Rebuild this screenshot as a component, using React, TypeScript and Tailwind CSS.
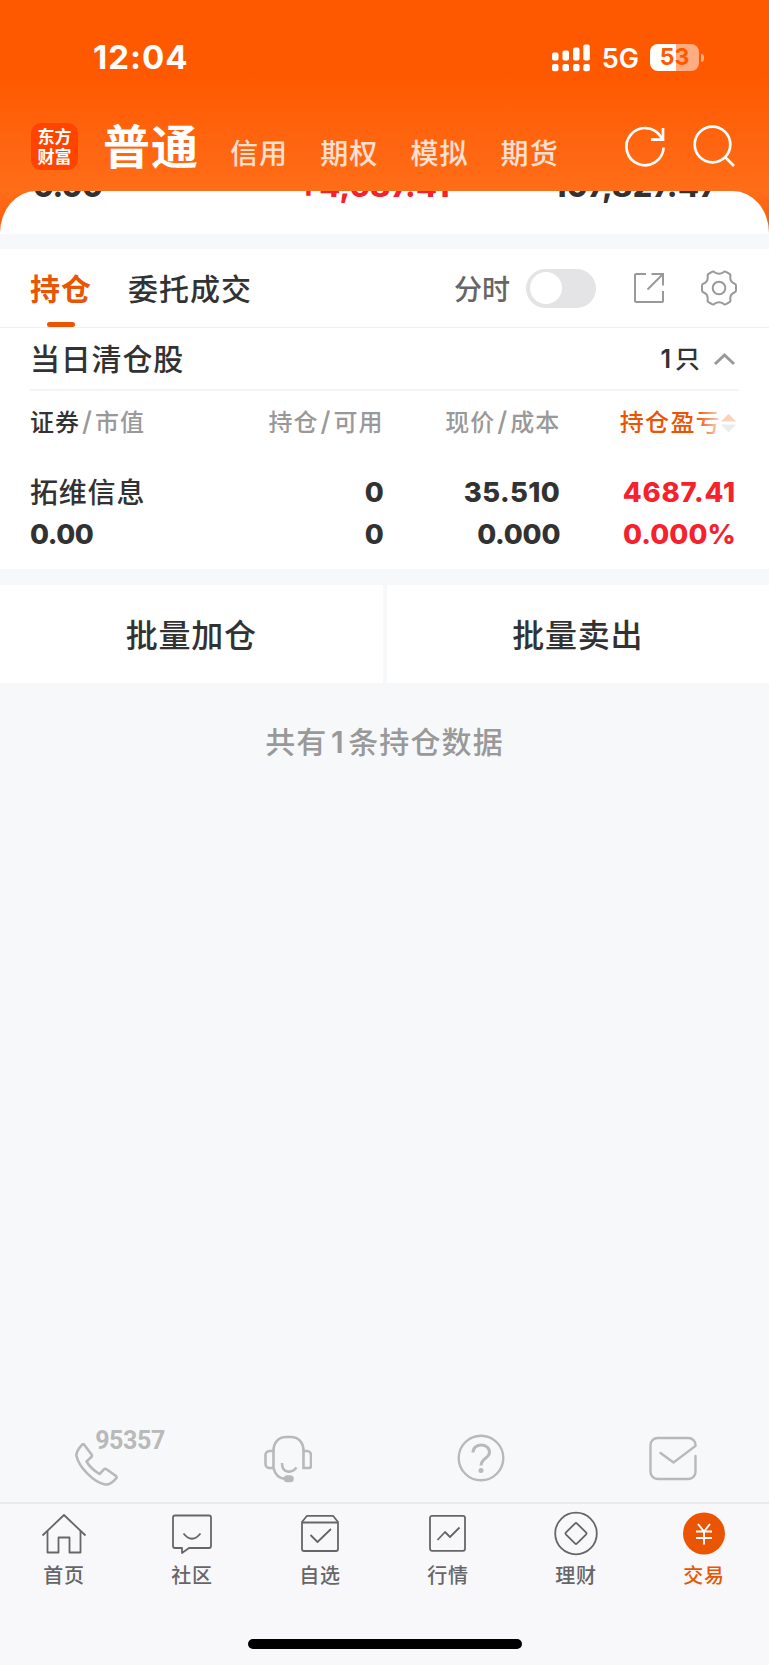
import React from "react";
import clsx from "clsx";

const ACCOUNT_TABS = ["信用", "期权", "模拟", "期货"];

const COLUMNS = [
  { main: "持仓", sub: "可用" },
  { main: "现价", sub: "成本" },
];

const SERVICES = [
  { key: "phone", icon: <PhoneIcon /> },
  { key: "support", icon: <HeadsetIcon /> },
  { key: "help", icon: <HelpIcon /> },
  { key: "feedback", icon: <MailIcon /> },
];

const NAV_ITEMS = [
  { label: "首页", icon: <HomeIcon /> },
  { label: "社区", icon: <CommunityIcon /> },
  { label: "自选", icon: <WatchlistIcon /> },
  { label: "行情", icon: <MarketIcon /> },
  { label: "理财", icon: <WealthIcon /> },
  { label: "交易", icon: <TradeIcon />, active: true },
];

export default function App() {
  return (
    <div className="flex h-[1665px] w-[769px] flex-col overflow-hidden bg-[#f7f8fa] font-['Inter','Noto_Sans_CJK_SC',sans-serif] text-[#323232]">
      <Header />
      <AssetSummary />
      <Positions />
      <BatchActions />
      <p className="mt-[41px] text-center text-[30px] font-medium leading-[36px] tracking-[1.1px] text-[#999]">
        共有<span className="mx-[3.5px] font-semibold">1</span>条持仓数据
      </p>
      <div className="flex-1" />
      <ServiceBar />
      <BottomNav />
    </div>
  );
}

function Header() {
  return (
    <header className="h-[191px] shrink-0 bg-linear-to-b from-[#ff5900] from-40% to-[#ff6d18] text-white">
      <div className="flex h-[115px] items-center justify-between pl-[93px] pr-[65px]">
        <span className="text-[33px] font-bold leading-none tracking-[1px]">
          12:04
        </span>
        <div className="flex items-center">
          <SignalIcon />
          <span className="ml-3 mr-[11px] pt-[2px] text-[27px] font-semibold leading-none">
            5G
          </span>
          <BatteryIcon />
        </div>
      </div>
      <div className="flex h-[62px] items-center pl-[31px] pr-[34px]">
        <div className="flex size-[47px] flex-col items-center justify-center rounded-[10px] bg-[#ff4400] font-['Noto_Sans_CJK_SC',sans-serif] text-[17px] font-bold leading-[20px]">
          <span>东方</span>
          <span>财富</span>
        </div>
        <h1 className="ml-[25px] text-[47px] font-bold leading-none tracking-[1px]">
          普通
        </h1>
        <nav className="ml-[31px] mt-[16px] flex gap-8">
          {ACCOUNT_TABS.map((tab) => (
            <span
              key={tab}
              className="text-[28px] font-medium leading-none tracking-[1.1px] text-white/80"
            >
              {tab}
            </span>
          ))}
        </nav>
        <div className="ml-auto flex items-center gap-[27px]">
          <RefreshIcon />
          <SearchIcon />
        </div>
      </div>
    </header>
  );
}

// Scrolled card, only the bottom edge of the figures stays visible
function AssetSummary() {
  return (
    <section className="h-[43px] shrink-0 bg-linear-to-b from-[#ff6d18] to-[#ff5900]">
      <div className="h-full overflow-hidden rounded-t-[36px_42px] bg-white px-[33px]">
        <div className="-mt-[22px] flex text-[30.5px] font-extrabold leading-[34px] tracking-[0.3px]">
          <span className="w-[265px] tracking-[-0.7px]">0.00</span>
          <span className="w-[255px] text-[#f5222d]">+4,687.41</span>
          <span>107,827.47</span>
        </div>
      </div>
    </section>
  );
}

function Positions() {
  return (
    <section className="mt-[15px] h-[320px] shrink-0 bg-white">
      <div className="flex h-[79px] items-center border-b border-[#f0f0f2] pr-[32px] pl-[30px]">
        <div className="relative flex h-full items-center pt-[2px] text-[30px] font-bold tracking-[1px] text-[#ea5504]">
          持仓
          <span className="absolute bottom-0 left-[17px] h-[5px] w-[28px] rounded-full bg-[#ea5504]" />
        </div>
        <span className="ml-[36px] pt-[2px] text-[30px] font-medium tracking-[1px]">
          委托成交
        </span>
        <span className="ml-auto pt-[3px] text-[28px] font-medium text-[#666]">
          分时
        </span>
        <span className="ml-[16px] flex h-[39px] w-[70px] items-center rounded-full bg-[#e4e4e6] pl-1">
          <span className="size-8 rounded-full bg-white" />
        </span>
        <span className="ml-[38px]">
          <ExportIcon />
        </span>
        <span className="ml-[37px]">
          <GearIcon />
        </span>
      </div>

      <div className="mx-[30px] flex h-[63px] items-center border-b-2 border-[#f4f4f6]">
        <span className="pt-px text-[30px] font-medium tracking-[0.8px]">
          当日清仓股
        </span>
        <span className="ml-auto mr-[13px] pt-[2px] text-[25px] font-medium">
          <span className="mr-[4px] font-semibold">1</span>只
        </span>
        <svg width="23" height="14" viewBox="0 0 23 14" className="mr-[3px]">
          <path d="M2 12 11.5 3 21 12" fill="none" stroke="#999" strokeWidth="3" />
        </svg>
      </div>

      <div className="mx-[30px] mt-[14px] grid w-[707px] grid-cols-4 text-right text-[24px] font-medium leading-[36px] tracking-[1px] text-[#999]">
        <span className="text-left">
          <span className="text-[#323232]">证券</span>
          <Slash />
          市值
        </span>
        {COLUMNS.map((col) => (
          <span key={col.main}>
            {col.main}
            <Slash />
            {col.sub}
          </span>
        ))}
        <span className="relative flex items-center justify-end text-[#ea5504]">
          <span className="mr-[16px] tracking-[1.3px]">持仓盈亏</span>
          <span className="absolute right-0 flex h-full w-[40px] items-center justify-end bg-linear-to-r from-white/0 to-white/80 to-60% pr-px">
            <svg width="15" height="22" viewBox="0 0 16 22">
              <path d="M8 1 16 9.5H0z" fill="#fad3bd" />
              <path d="M8 21 0 12.5h16z" fill="#ececec" />
            </svg>
          </span>
        </span>
      </div>

      <div className="mx-[30px] mt-[30px] grid w-[707px] grid-cols-4 text-right text-[27.5px] font-extrabold leading-[42px] tracking-[-0.2px]">
        <span className="relative top-px text-left text-[28px] font-medium tracking-[0.8px]">
          拓维信息
        </span>
        <span>0</span>
        <span className="tracking-[0.4px]">35.510</span>
        <span className="pr-px tracking-[0.8px] text-[#f5222d]">4687.41</span>
        <span className="text-left tracking-[-0.4px]">0.00</span>
        <span>0</span>
        <span>0.000</span>
        <span className="pr-px tracking-[0.1px] text-[#f5222d]">0.000%</span>
      </div>
    </section>
  );
}

function Slash() {
  return <span className="mx-[2px] text-[27px] leading-none">/</span>;
}

function BatchActions() {
  return (
    <div className="mt-[16px] grid h-[98px] shrink-0 grid-cols-2 gap-1 text-[32px] font-medium tracking-[0.8px]">
      {["批量加仓", "批量卖出"].map((label) => (
        <button key={label} className="bg-white pt-[3px]">
          {label}
        </button>
      ))}
    </div>
  );
}

function ServiceBar() {
  return (
    <div className="grid h-[77px] shrink-0 grid-cols-4 text-[#b9b9b9]">
      {SERVICES.map((s) => (
        <div key={s.key} className="flex justify-center">
          {s.icon}
        </div>
      ))}
    </div>
  );
}

function BottomNav() {
  return (
    <footer className="h-[163px] shrink-0 border-t-2 border-[#e9eaec] bg-[#f8f8fb]">
      <nav className="grid w-[768px] grid-cols-6 pt-[7px]">
        {NAV_ITEMS.map((item) => (
          <div
            key={item.label}
            className={clsx(
              "flex flex-col items-center",
              item.active ? "text-[#ea5504]" : "text-[#666]",
            )}
          >
            {item.icon}
            <span className="mt-[5px] text-[20px] font-medium leading-[28px] tracking-[0.8px]">
              {item.label}
            </span>
          </div>
        ))}
      </nav>
      <div className="mx-auto mt-[49px] h-[10px] w-[274px] rounded-full bg-black" />
    </footer>
  );
}

/* ---- status bar ---- */

function SignalIcon() {
  return (
    <svg width="38" height="28" viewBox="0 0 38 28" fill="currentColor">
      <rect x="0" y="8.5" width="6.5" height="8" rx="2" />
      <rect x="10.5" y="6.5" width="6.5" height="10" rx="2" />
      <rect x="21" y="3.5" width="6.5" height="13" rx="2" />
      <rect x="31.3" y="0.5" width="6.5" height="16" rx="2" />
      <rect x="0" y="20" width="6.5" height="7.2" rx="2" />
      <rect x="10.5" y="20" width="6.5" height="7.2" rx="2" />
      <rect x="21" y="20" width="6.5" height="7.2" rx="2" />
      <rect x="31.3" y="20" width="6.5" height="7.2" rx="2" />
    </svg>
  );
}

function BatteryIcon() {
  return (
    <div className="flex items-center">
      <div className="flex h-[27px] w-[49px] items-center justify-center rounded-[8px] bg-linear-to-r from-white from-54% to-[#ffac80] to-54% text-[23px] font-bold leading-none text-[#ff5900]">
        53
      </div>
      <span className="ml-[2px] h-[8px] w-[3px] rounded-r-full bg-[#ffac80]" />
    </div>
  );
}

/* ---- header ---- */

function RefreshIcon() {
  return (
    <svg width="42" height="42" viewBox="0 0 42 42" fill="none" stroke="currentColor" strokeWidth="2.7" className="overflow-visible">
      <path d="M39.6 22.5A18.6 18.6 0 1 1 36.5 11.3L38.5 14.2" />
      <path d="M39 3V14.7H27" />
    </svg>
  );
}

function SearchIcon() {
  return (
    <svg width="42" height="42" viewBox="0 0 42 42" fill="none" stroke="currentColor" strokeWidth="2.7">
      <circle cx="19.5" cy="19.5" r="17.8" />
      <path d="M32 32 41 41" />
    </svg>
  );
}

/* ---- positions toolbar ---- */

function ExportIcon() {
  return (
    <svg width="30" height="30" viewBox="0 0 30 30" fill="none" stroke="#999" strokeWidth="2">
      <path d="M12 1H2a1 1 0 0 0-1 1v26a1 1 0 0 0 1 1h26a1 1 0 0 0 1-1V18" />
      <path d="M17.5 1H29v11.5M28.5 1.5 13.5 16.5" />
    </svg>
  );
}

function GearIcon() {
  return (
    <svg width="36" height="36" viewBox="0 0 36 36" fill="none" stroke="#999" strokeWidth="2" strokeLinejoin="round">
      <path d="M11 1.8Q12.5 1 13.5 2.2 18 5.4 22.5 2.2 23.5 1 25 1.8L28.5 3.8Q29.8 4.6 29.3 6.2 28.8 12 33.7 13.8 35 14.2 35 15.8V20.2Q35 21.8 33.7 22.2 28.8 24 29.3 29.8 29.8 31.4 28.5 32.2L25 34.2Q23.5 35 22.5 33.8 18 30.6 13.5 33.8 12.5 35 11 34.2L7.5 32.2Q6.2 31.4 6.7 29.8 7.2 24 2.3 22.2 1 21.8 1 20.2V15.8Q1 14.2 2.3 13.8 7.2 12 6.7 6.2 6.2 4.6 7.5 3.8Z" />
      <circle cx="18" cy="18" r="6.3" />
    </svg>
  );
}

/* ---- service shortcuts ---- */

function PhoneIcon() {
  return (
    <div className="relative h-[70px] w-[96px]">
      <svg width="44" height="44" viewBox="0 0 44 44" className="mt-[18px] ml-[27px]" fill="none" stroke="currentColor" strokeWidth="2.6" strokeLinejoin="round">
        <path d="M9 1.5 16.5 11.5Q17.5 12.8 16.3 14L11.5 18.5Q16 26 24.5 31L29 26.3Q30.2 25.2 31.5 26.2L41 33Q42 34 41.2 35.2 36 42 30 41.5C18 39 4 24 1.5 13Q1 8 7 1.8 8.2.7 9 1.5Z" />
      </svg>
      <span className="absolute left-[47px] top-[2px] font-['Roboto',sans-serif] text-[25px] font-bold leading-[28px] tracking-[-0.4px]">
        95357
      </span>
    </div>
  );
}

function HeadsetIcon() {
  return (
    <svg width="48" height="48" viewBox="0 0 48 48" className="mt-[10px]" fill="none" stroke="currentColor" strokeWidth="2.6">
      <path d="M9.5 16C9.5 7 15 2 22 2h5C34 2 39.5 7 39.5 16" />
      <path d="M9.5 16v17H5.5a4 4 0 0 1-4-4v-9a4 4 0 0 1 4-4zM39.500 16v17h5.500q2 0 2-2V20a4 4 0 0 0-4-4zM9.500 33q2.500 10 11.500 11" />
      <path d="M18 28C18 38.5 28 38.5 32.5 32.5" />
      <rect x="21" y="41.5" width="7.5" height="4.5" rx="2.2" fill="currentColor" />
    </svg>
  );
}

function HelpIcon() {
  return (
    <svg width="48" height="48" viewBox="0 0 48 48" className="mt-[9px]" fill="none" stroke="currentColor" strokeWidth="2.4">
      <circle cx="24" cy="24" r="22.3" />
      <path d="M16 18.5c0-10 16.5-10 16.5 0C32.5 24 24 24.5 24 31.5" strokeWidth="3" />
      <circle cx="24" cy="36.5" r="2.5" fill="currentColor" stroke="none" />
    </svg>
  );
}

function MailIcon() {
  return (
    <svg width="48" height="48" viewBox="0 0 48 48" className="mt-[9px]" fill="none" stroke="currentColor" strokeWidth="2.4" strokeLinecap="round">
      <path d="M46.5 22v16a7 7 0 0 1-7 7h-31a7 7 0 0 1-7-7V11a7 7 0 0 1 7-7h31a7 7 0 0 1 7 7v1L24.5 28.5 11.5 19" />
    </svg>
  );
}

/* ---- bottom navigation ---- */

function HomeIcon() {
  return (
    <svg width="46" height="46" viewBox="0 0 46 46" fill="none" stroke="currentColor" strokeWidth="1.8" strokeLinejoin="round">
      <path d="M1.5 24.5 23 4 44.5 24.5" />
      <path d="M6.5 20v21.5h11V26.5h11v15h11V20" />
    </svg>
  );
}

function CommunityIcon() {
  return (
    <svg width="46" height="46" viewBox="0 0 46 46" fill="none" stroke="currentColor" strokeWidth="1.8" strokeLinejoin="round">
      <path d="M6 4.5h34q2 0 2 2V35q0 2-2 2H20l-7 5v-5H6q-2 0-2-2V6.5q0-2 2-2Z" />
      <path d="M14.5 22.5Q23 33 31.5 22.5" />
    </svg>
  );
}

function WatchlistIcon() {
  return (
    <svg width="46" height="46" viewBox="0 0 46 46" fill="none" stroke="currentColor" strokeWidth="1.8" strokeLinejoin="round">
      <path d="M5 11 10 4.8h26L41 11v27q0 2-2 2H7q-2 0-2-2Z" />
      <path d="M5 11.5h36M13.5 24l7 7L34 18" />
    </svg>
  );
}

function MarketIcon() {
  return (
    <svg width="46" height="46" viewBox="0 0 46 46" fill="none" stroke="currentColor" strokeWidth="1.8" strokeLinejoin="round">
      <rect x="5" y="4.8" width="35" height="35" rx="2" />
      <path d="M12.5 29 20 21l5 5 9.5-9.5" />
    </svg>
  );
}

function WealthIcon() {
  return (
    <svg width="46" height="46" viewBox="0 0 46 46" fill="none" stroke="currentColor" strokeWidth="1.8" strokeLinejoin="round">
      <circle cx="23" cy="22.5" r="20.8" />
      <rect x="15.2" y="14.7" width="15.6" height="15.6" rx="1.5" transform="rotate(45 23 22.5)" />
    </svg>
  );
}

function TradeIcon() {
  return (
    <svg width="46" height="46" viewBox="0 0 46 46" fill="none">
      <circle cx="23" cy="22.5" r="21" fill="currentColor" />
      <path d="M17 13 23 20.5 29 13M15 20.5h16M15 27h16M23 20.5V33.5" stroke="#fff" strokeWidth="1.9" />
    </svg>
  );
}
